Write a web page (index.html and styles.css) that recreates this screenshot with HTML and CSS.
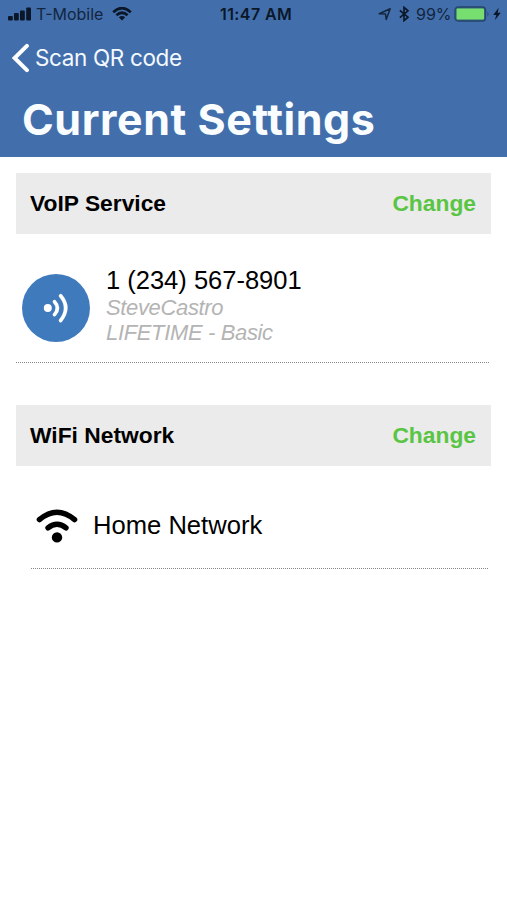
FILE: index.html
```html
<!DOCTYPE html>
<html lang="en">
<head>
    <meta charset="UTF-8">
    <meta name="viewport" content="width=device-width, initial-scale=1.0">
    <title>Current Settings</title>
    <link rel="stylesheet" href="styles.css">
</head>
<body>
    <header class="header">
        <div class="status">
            <div class="status-left">
                <svg class="signal" width="24" height="14" viewBox="0 0 24 14">
                    <rect x="0" y="9" width="4.8" height="4.5" rx="1"/>
                    <rect x="6" y="6" width="4.8" height="7.5" rx="1"/>
                    <rect x="12" y="3.5" width="4.8" height="10" rx="1"/>
                    <rect x="18.2" y="0.5" width="4.8" height="13" rx="1"/>
                </svg>
                <span class="carrier">T-Mobile</span>
                <svg class="status-wifi" width="20" height="14" viewBox="0 0 20 14">
                    <path d="M1.2 5.2Q10 -3 18.8 5.2M4.4 8.3Q10 3.2 15.6 8.3" fill="none" stroke="#0b1728" stroke-width="2.7"/>
                    <path d="M6.8 10.3Q10 7.6 13.2 10.3L10 13.6Z"/>
                </svg>
            </div>
            <span class="time">11:47 AM</span>
            <div class="status-right">
                <svg class="location" width="14" height="14" viewBox="0 0 14 14">
                    <path d="M1.2 6.8L12.2 1.8L8.2 12.4L7.5 6.9Z" fill="none" stroke="#14253f" stroke-width="1.5" stroke-linejoin="round"/>
                </svg>
                <svg class="bluetooth" width="10" height="16" viewBox="0 0 10 16">
                    <path d="M0.8 4.3L9 11.2L5 14.7V1.3L9 4.8L0.8 11.7" fill="none" stroke="#0b1728" stroke-width="1.6"/>
                </svg>
                <span class="percent">99%</span>
                <svg class="battery" width="36" height="16" viewBox="0 0 36 16">
                    <rect x="1" y="1" width="30.5" height="14" rx="3" fill="#3b6a78" stroke="#24466f" stroke-width="1.3"/>
                    <rect x="2.6" y="2.6" width="27.4" height="10.8" rx="1.2" fill="#77de70"/>
                    <path d="M33.5 5.5Q35.5 8 33.5 10.5Z" fill="#24466f"/>
                </svg>
                <svg class="bolt" width="8" height="14" viewBox="0 0 8 14">
                    <path d="M5.7 0.8L0.2 7.9H3.3L1.8 13.2L7.8 5.8H4.7Z"/>
                </svg>
            </div>
        </div>
        <a class="back">
            <svg class="back-arrow" width="19" height="30" viewBox="0 0 19 30">
                <path d="M15.9 2.8L3.6 15L15.9 27.2" fill="none" stroke="#fff" stroke-width="4" stroke-linecap="round" stroke-linejoin="miter"/>
            </svg>
            <span class="back-label">Scan QR code</span>
        </a>
        <h1 class="title">Current Settings</h1>
    </header>
    <main class="content">
        <div class="bar">
            <span class="bar-name">VoIP Service</span>
            <a class="change">Change</a>
        </div>
        <div class="account">
            <svg class="account-icon" width="68" height="68" viewBox="0 0 68 68">
                <circle cx="34" cy="34" r="34" fill="#3f7abd"/>
                <circle cx="25.8" cy="34" r="4" fill="#fff"/>
                <path d="M32.5 27.7Q38.3 34 32.5 40.6M38.6 21.8Q48.8 34 38.6 46.5" fill="none" stroke="#fff" stroke-width="3.7" stroke-linecap="round"/>
            </svg>
            <div class="account-text">
                <div class="number">1 (234) 567-8901</div>
                <div class="detail">SteveCastro</div>
                <div class="detail">LIFETIME - Basic</div>
            </div>
        </div>
        <div class="bar">
            <span class="bar-name">WiFi Network</span>
            <a class="change">Change</a>
        </div>
        <div class="network">
            <svg class="network-icon" width="42" height="36" viewBox="0 0 42 36">
                <path d="M3.4 12.6Q21 -2.2 38.6 12.6M12 20.8Q21 13.8 30 20.8" fill="none" stroke="#000" stroke-width="5.4" stroke-linecap="round"/>
                <circle cx="21" cy="30.4" r="5.2"/>
            </svg>
            <span class="network-name">Home Network</span>
        </div>
    </main>
</body>
</html>
```

FILE: styles.css
```css
body{
    margin: 0;
    background: #fff;
    font-family: "Liberation Sans", Arial, sans-serif;
    color: #000;
}
svg {
    display: block;
    flex: none;
}
span, h1, .number, .detail, .change {
    white-space: nowrap;
}
.header {
    box-sizing: border-box;
    height: 157px;
    background: #426fab;
    font-family: Inter, sans-serif;
}
.status {
    display: grid;
    grid-template-columns: 220px 1fr auto;
    align-items: center;
    height: 28px;
    padding-right: 6px;
    font-size: 16px;
    color: #0b1728;
    fill: #0b1728;
}
.status-left, .status-right {
    display: flex;
    align-items: center;
}
.signal {
    margin-left: 8px;
}
.carrier {
    width: 68px;
    margin-left: 4px;
    color: #14253f;
}
.status-wifi {
    margin-left: 8px;
}
.time {
    font-weight: 600;
    letter-spacing: 0.4px;
}
.location {
    margin-right: 7px;
}
.bluetooth {
    margin-right: 7px;
}
.percent {
    width: 35px;
    margin-right: 3px;
    color: #14253f;
}
.battery {
    margin-right: 3px;
}
.back {
    display: flex;
    align-items: center;
    height: 59px;
    padding-left: 11px;
    color: #f4f9ff;
    font-size: 22.5px;
    letter-spacing: -0.35px;
}
.back-label {
    margin-left: 5px;
}
.title {
    margin: 0;
    padding-left: 22px;
    color: #fafdff;
    font-size: 43px;
    line-height: 64px;
    font-weight: 700;
    letter-spacing: 0.55px;
}
.content {
    padding: 16px 16px 0;
}
.bar {
    display: flex;
    align-items: center;
    justify-content: space-between;
    box-sizing: border-box;
    height: 61px;
    padding: 0 15px 0 14px;
    background: #ebebeb;
    font-size: 22.8px;
    font-weight: bold;
}
.change {
    color: #5ac544;
}
.account {
    display: flex;
    box-sizing: border-box;
    height: 129px;
    margin: 0 2px 42px 0;
    padding: 40px 0 0 6px;
    border-bottom: 1px dotted #888;
}
.account-text {
    margin: -8px 0 0 16px;
}
.number {
    font-size: 25.5px;
    line-height: 29px;
}
.detail {
    font-size: 22px;
    line-height: 25px;
    letter-spacing: -0.35px;
    font-style: italic;
    color: #b4b4b4;
}
.network {
    display: flex;
    align-items: center;
    box-sizing: border-box;
    height: 103px;
    margin: 0 3px 0 15px;
    padding: 16px 0 0 5px;
    border-bottom: 1px dotted #888;
}
.network-name {
    margin-left: 15px;
    font-size: 25.6px;
}
```
